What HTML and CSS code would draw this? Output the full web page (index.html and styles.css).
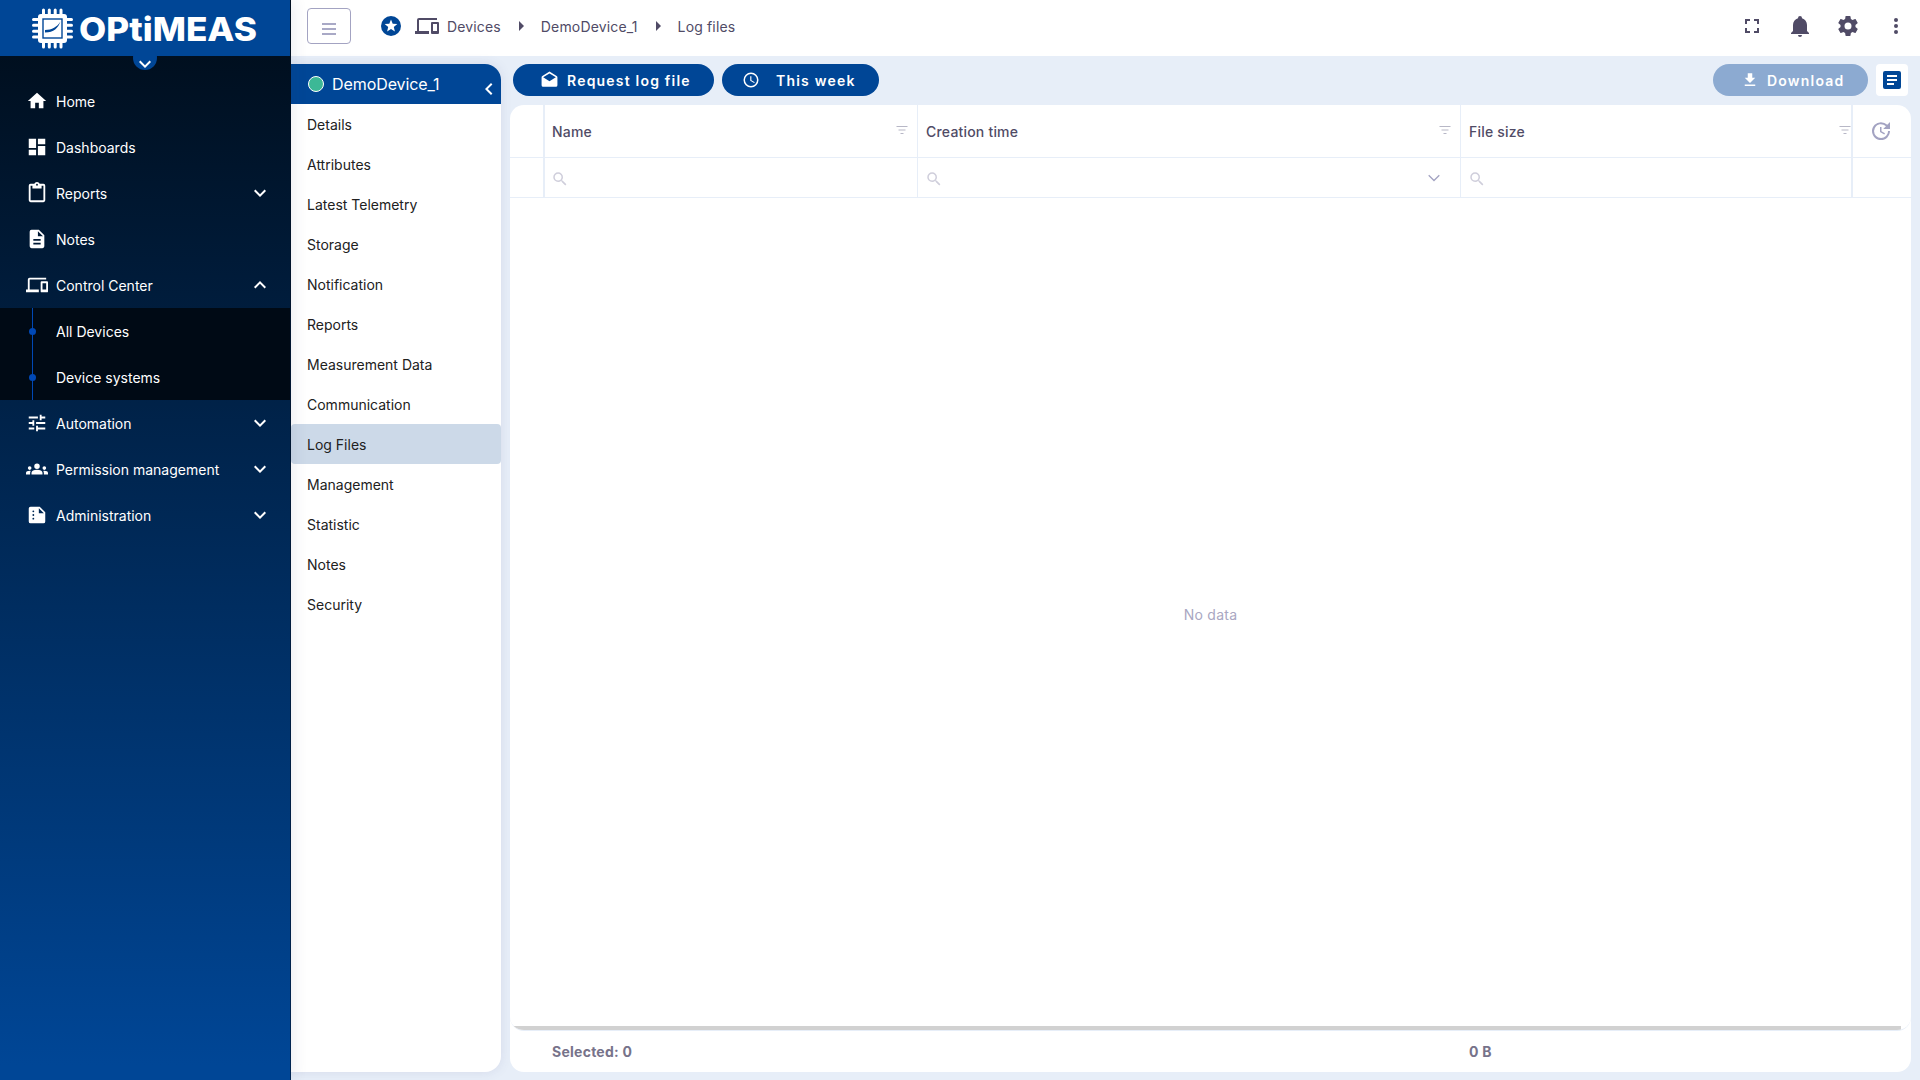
FILE: index.html
```html
<!DOCTYPE html>
<html lang="en">
<head>
    <meta charset="UTF-8">
    <meta name="viewport" content="width=device-width, initial-scale=1.0">
    <title>Log files</title>
    <link rel="stylesheet" href="styles.css">
</head>
<body>
    <aside class="sidebar">
        <div class="logo">
            <svg class="logo-chip" viewBox="0 0 42 42">
                <g stroke="#fff" stroke-width="3" stroke-linecap="round">
                    <path d="M12.5 3v37M18.3 3v37M24.2 3v37M30 3v37M2.5 12.5h38M2.5 18.3h38M2.5 24.2h38M2.5 30h38"/>
                </g>
                <rect x="7" y="7" width="29" height="29" rx="3" fill="#fff"/>
                <rect x="12" y="12" width="19" height="19" fill="none" stroke="#004696" stroke-width="1.4"/>
                <path d="M14 23c7 0 12-3 15.500-8.500C27 21 23 25.500 14 25.500z" fill="#004696"/>
            </svg>
            <svg class="logo-name" viewBox="0 0 190 44">
                <text x="0" y="34" textLength="178" lengthAdjust="spacingAndGlyphs">OPtiMEAS</text>
            </svg>
            <span class="logo-toggle"><svg viewBox="0 0 24 24"><path d="M7.410 8.580 12 13.170l4.590-4.590L18 10l-6 6-6-6z"/></svg></span>
        </div>
        <nav class="menu">
            <a class="menu-item">
                <svg class="icon" viewBox="0 0 24 24"><path d="M10 20v-6h4v6h5v-8h3L12 3 2 12h3v8z"/></svg>
                <span>Home</span>
            </a>
            <a class="menu-item">
                <svg class="icon" viewBox="0 0 24 24"><path d="M13 3v6h8V3m-8 18h8V11h-8M3 21h8v-6H3m0-2h8V3H3z"/></svg>
                <span>Dashboards</span>
            </a>
            <a class="menu-item">
                <svg class="icon" viewBox="0 0 24 24"><path d="M19 2h-4.180C14.400.84 13.300 0 12 0S9.600.84 9.180 2H5a2 2 0 0 0-2 2v16a2 2 0 0 0 2 2h14a2 2 0 0 0 2-2V4a2 2 0 0 0-2-2m-7 0a1 1 0 1 1 0 2 1 1 0 0 1 0-2m7 18H5V4h2v3h10V4h2z"/></svg>
                <span>Reports</span>
                <svg class="arrow" viewBox="0 0 24 24"><path d="M7.410 8.580 12 13.170l4.590-4.590L18 10l-6 6-6-6z"/></svg>
            </a>
            <a class="menu-item">
                <svg class="icon" viewBox="0 0 24 24"><path d="M14 2H6a2 2 0 0 0-2 2v16a2 2 0 0 0 2 2h12a2 2 0 0 0 2-2V8zm2 16H8v-2h8zm0-4H8v-2h8zm-3-5V3.500L18.500 9z"/></svg>
                <span>Notes</span>
            </a>
            <a class="menu-item">
                <svg class="icon" viewBox="0 0 24 24"><path d="M4 6h18V4H4a2 2 0 0 0-2 2v11H0v3h14v-3H4zm19 2h-6a1 1 0 0 0-1 1v10a1 1 0 0 0 1 1h6a1 1 0 0 0 1-1V9a1 1 0 0 0-1-1m-1 9h-4v-7h4z"/></svg>
                <span>Control Center</span>
                <svg class="arrow" viewBox="0 0 24 24"><path d="M7.410 15.410 12 10.830l4.590 4.580L18 14l-6-6-6 6z"/></svg>
            </a>
            <div class="submenu">
                <a class="submenu-item">All Devices</a>
                <a class="submenu-item">Device systems</a>
            </div>
            <a class="menu-item">
                <svg class="icon" viewBox="0 0 24 24"><path d="M3 17v2h6v-2zM3 5v2h10V5zm10 16v-2h8v-2h-8v-2h-2v6zM7 9v2H3v2h4v2h2V9zm14 4v-2H11v2zm-6-4h2V7h4V5h-4V3h-2z"/></svg>
                <span>Automation</span>
                <svg class="arrow" viewBox="0 0 24 24"><path d="M7.410 8.580 12 13.170l4.590-4.590L18 10l-6 6-6-6z"/></svg>
            </a>
            <a class="menu-item">
                <svg class="icon" viewBox="0 0 24 24"><path d="M12 12.750c1.630 0 3.070.39 4.240.9 1.080.48 1.760 1.560 1.760 2.730V18H6v-1.610c0-1.180.68-2.260 1.760-2.730 1.170-.52 2.610-.91 4.240-.91M4 13a2 2 0 1 0 0-4 2 2 0 0 0 0 4m1.130 1.100C4.760 14.040 4.390 14 4 14c-.99 0-1.930.21-2.780.58C.48 14.900 0 15.620 0 16.430V18h4.500v-1.610c0-.83.23-1.610.63-2.290M20 13a2 2 0 1 0 0-4 2 2 0 0 0 0 4m4 3.430c0-.81-.48-1.530-1.220-1.850A6.950 6.950 0 0 0 20 14c-.39 0-.76.04-1.130.1.4.68.63 1.460.63 2.290V18H24zM12 6a3 3 0 1 1 0 6 3 3 0 0 1 0-6"/></svg>
                <span>Permission management</span>
                <svg class="arrow" viewBox="0 0 24 24"><path d="M7.410 8.580 12 13.170l4.590-4.590L18 10l-6 6-6-6z"/></svg>
            </a>
            <a class="menu-item">
                <svg class="icon" viewBox="0 0 24 24"><path d="M15 3H5a2 2 0 0 0-2 2v14a2 2 0 0 0 2 2h14a2 2 0 0 0 2-2V9zM8 17a1 1 0 1 1 0-2 1 1 0 0 1 0 2m0-4a1 1 0 1 1 0-2 1 1 0 0 1 0 2m0-4a1 1 0 1 1 0-2 1 1 0 0 1 0 2m6 1V4.500l5.500 5.500z"/></svg>
                <span>Administration</span>
                <svg class="arrow" viewBox="0 0 24 24"><path d="M7.410 8.580 12 13.170l4.590-4.590L18 10l-6 6-6-6z"/></svg>
            </a>
        </nav>
    </aside>

    <div class="page">
        <header class="topbar">
            <button class="menu-button"><span></span><span></span><span></span></button>
            <div class="breadcrumb">
                <svg class="star" viewBox="0 0 24 24"><circle cx="12" cy="12" r="10"/><path d="m12 5.400 1.700 4.300 4.600.3-3.500 3 1.100 4.500-3.900-2.400-3.900 2.400 1.100-4.500-3.500-3 4.600-.3z" fill="#fff"/></svg>
                <svg class="devices" viewBox="0 0 24 24"><path d="M4 6h18V4H4a2 2 0 0 0-2 2v11H0v3h14v-3H4zm19 2h-6a1 1 0 0 0-1 1v10a1 1 0 0 0 1 1h6a1 1 0 0 0 1-1V9a1 1 0 0 0-1-1m-1 9h-4v-7h4z"/></svg>
                <span class="crumb">Devices</span>
                <svg class="crumb-arrow" viewBox="0 0 24 24"><path d="m10 17 5-5-5-5z"/></svg>
                <span class="crumb">DemoDevice_1</span>
                <svg class="crumb-arrow" viewBox="0 0 24 24"><path d="m10 17 5-5-5-5z"/></svg>
                <span class="crumb">Log files</span>
            </div>
            <div class="actions">
                <svg viewBox="0 0 24 24"><path d="M5 5h5v2H7v3H5zm9 0h5v5h-2V7h-3zm3 9h2v5h-5v-2h3zm-7 3v2H5v-5h2v3z"/></svg>
                <svg viewBox="0 0 24 24"><path d="M21 19v1H3v-1l2-2v-6c0-3.100 2.030-5.830 5-6.710V4a2 2 0 1 1 4 0v.29c2.970.88 5 3.610 5 6.710v6zm-7 2a2 2 0 0 1-4 0"/></svg>
                <svg viewBox="0 0 24 24"><path d="M12 15.500A3.500 3.500 0 0 1 8.500 12 3.500 3.500 0 0 1 12 8.500a3.500 3.500 0 0 1 3.500 3.500 3.500 3.500 0 0 1-3.500 3.500m7.430-2.530c.04-.32.07-.64.07-.97s-.03-.66-.07-1l2.110-1.630c.19-.15.24-.42.12-.64l-2-3.460c-.12-.22-.39-.31-.61-.22l-2.490 1c-.52-.39-1.060-.73-1.690-.98l-.37-2.650A.506.506 0 0 0 14 2h-4c-.25 0-.46.18-.5.42l-.37 2.650c-.63.25-1.170.59-1.690.98l-2.490-1c-.22-.09-.49 0-.61.22l-2 3.460c-.13.22-.07.49.12.64L4.570 11c-.04.34-.07.67-.07 1s.03.65.07.97l-2.110 1.660c-.19.15-.25.42-.12.64l2 3.460c.12.22.39.3.61.22l2.490-1.010c.52.4 1.060.74 1.690.99l.37 2.650c.04.24.25.42.5.42h4c.25 0 .46-.18.5-.42l.37-2.650c.63-.26 1.170-.59 1.690-.99l2.490 1.010c.22.08.49 0 .61-.22l2-3.460c.12-.22.07-.49-.12-.64z"/></svg>
                <svg viewBox="0 0 24 24"><circle cx="12" cy="6" r="2"/><circle cx="12" cy="12" r="2"/><circle cx="12" cy="18" r="2"/></svg>
            </div>
        </header>

        <main class="content">
            <section class="device">
                <div class="device-header">
                    <span class="status"></span>
                    <span class="device-name">DemoDevice_1</span>
                    <svg viewBox="0 0 24 24"><path d="M15.410 16.580 10.830 12l4.580-4.590L14 6l-6 6 6 6z"/></svg>
                </div>
                <a class="device-item">Details</a>
                <a class="device-item">Attributes</a>
                <a class="device-item">Latest Telemetry</a>
                <a class="device-item">Storage</a>
                <a class="device-item">Notification</a>
                <a class="device-item">Reports</a>
                <a class="device-item">Measurement Data</a>
                <a class="device-item">Communication</a>
                <a class="device-item active">Log Files</a>
                <a class="device-item">Management</a>
                <a class="device-item">Statistic</a>
                <a class="device-item">Notes</a>
                <a class="device-item">Security</a>
            </section>

            <section class="logs">
                <div class="toolbar">
                    <button class="btn btn-request">
                        <svg viewBox="0 0 24 24"><path d="m4 8 8 5 8-5-8-5zm18 0v10a2 2 0 0 1-2 2H4a2 2 0 0 1-2-2V8c0-.73.39-1.360.97-1.710L12 .64l9.030 5.650c.58.35.97.98.97 1.710"/></svg>
                        <span>Request log file</span>
                    </button>
                    <button class="btn btn-week">
                        <svg viewBox="0 0 24 24"><path d="M12 20a8 8 0 0 0 8-8 8 8 0 0 0-8-8 8 8 0 0 0-8 8 8 8 0 0 0 8 8m0-18a10 10 0 0 1 10 10 10 10 0 0 1-10 10A10 10 0 0 1 2 12 10 10 0 0 1 12 2m.5 5v5.250l4.500 2.670-.75 1.230L11 13V7z"/></svg>
                        <span>This week</span>
                    </button>
                    <button class="btn btn-download">
                        <svg viewBox="0 0 24 24"><path d="M5 20h14v-2H5m14-9h-4V3H9v6H5l7 7z"/></svg>
                        <span>Download</span>
                    </button>
                    <button class="btn-note">
                        <svg viewBox="0 0 24 24"><path d="M19 3H5a2 2 0 0 0-2 2v14a2 2 0 0 0 2 2h14a2 2 0 0 0 2-2V5a2 2 0 0 0-2-2m-5 14H7v-2h7zm3-4H7v-2h10zm0-4H7V7h10z"/></svg>
                    </button>
                </div>

                <div class="grid">
                    <div class="row head">
                        <div class="cell"></div>
                        <div class="cell">
                            <span>Name</span>
                            <svg class="filter" viewBox="0 0 12 10"><path d="M.5 1.500h11M2.500 5h7M4.500 8.500h3"/></svg>
                        </div>
                        <div class="cell">
                            <span>Creation time</span>
                            <svg class="filter" viewBox="0 0 12 10"><path d="M.5 1.500h11M2.500 5h7M4.500 8.500h3"/></svg>
                        </div>
                        <div class="cell">
                            <span>File size</span>
                            <svg class="filter" viewBox="0 0 12 10"><path d="M.5 1.500h11M2.500 5h7M4.500 8.500h3"/></svg>
                        </div>
                        <div class="cell">
                            <svg class="refresh" viewBox="0 0 24 24"><path d="M21 10.120h-6.780l2.740-2.820c-2.730-2.700-7.150-2.800-9.880-.1a6.875 6.875 0 0 0 0 9.790 7.020 7.020 0 0 0 9.880 0C18.320 15.650 19 14.080 19 12.100h2c0 1.980-.88 4.550-2.640 6.290-3.510 3.480-9.210 3.480-12.720 0-3.500-3.470-3.530-9.110-.02-12.580a8.987 8.987 0 0 1 12.650 0L21 3zM12.500 8v4.250l3.500 2.080-.72 1.210L11 13V8z"/></svg>
                        </div>
                    </div>
                    <div class="row search">
                        <div class="cell"></div>
                        <div class="cell">
                            <svg class="magnify" viewBox="0 0 24 24"><path d="M9.500 3A6.500 6.500 0 0 1 16 9.500c0 1.610-.59 3.090-1.560 4.230l.27.27h.79l5 5-1.500 1.500-5-5v-.79l-.27-.27A6.516 6.516 0 0 1 9.500 16a6.500 6.500 0 1 1 0-13m0 2C7 5 5 7 5 9.500S7 14 9.500 14 14 12 14 9.500 12 5 9.500 5"/></svg>
                        </div>
                        <div class="cell">
                            <svg class="magnify" viewBox="0 0 24 24"><path d="M9.500 3A6.500 6.500 0 0 1 16 9.500c0 1.610-.59 3.090-1.560 4.230l.27.27h.79l5 5-1.500 1.500-5-5v-.79l-.27-.27A6.516 6.516 0 0 1 9.500 16a6.500 6.500 0 1 1 0-13m0 2C7 5 5 7 5 9.500S7 14 9.500 14 14 12 14 9.500 12 5 9.500 5"/></svg>
                            <svg class="drop" viewBox="0 0 12 8"><path d="m.7 1.200 5.300 5.300 5.300-5.300"/></svg>
                        </div>
                        <div class="cell">
                            <svg class="magnify" viewBox="0 0 24 24"><path d="M9.500 3A6.500 6.500 0 0 1 16 9.500c0 1.610-.59 3.090-1.560 4.230l.27.27h.79l5 5-1.500 1.500-5-5v-.79l-.27-.27A6.516 6.516 0 0 1 9.500 16a6.500 6.500 0 1 1 0-13m0 2C7 5 5 7 5 9.500S7 14 9.500 14 14 12 14 9.500 12 5 9.500 5"/></svg>
                        </div>
                        <div class="cell"></div>
                    </div>
                    <div class="grid-body">
                        <p class="no-data">No data</p>
                        <div class="scroll"></div>
                    </div>
                    <div class="row foot">
                        <div></div>
                        <div class="sum">Selected: 0</div>
                        <div></div>
                        <div class="sum">0 B</div>
                        <div></div>
                    </div>
                </div>
            </section>
        </main>
    </div>
</body>
</html>
```
FILE: styles.css
```css
* {
    box-sizing: border-box;
}
body {
    margin: 0;
    display: flex;
    height: 100vh;
    overflow: hidden;
    font-family: Inter, sans-serif;
    font-size: 14px;
    background-color: #e7eef8;
}
svg {
    display: block;
    fill: currentColor;
    flex-shrink: 0;
}
button {
    border: none;
    padding: 0;
    font-family: inherit;
}

/* Sidebar */
.sidebar {
    width: 291px;
    flex-shrink: 0;
    color: #fff;
    background: linear-gradient(180deg, #000f1f 56px, #004696 1065px);
    border-right: 1px solid rgba(0, 15, 35, 0.6);
    z-index: 1;
    box-shadow: 0 0 16px rgba(40, 50, 90, 0.12);
}
.logo {
    position: relative;
    display: flex;
    height: 56px;
    padding: 7px 0 0 31px;
    background-color: #004696;
}
.logo-chip {
    width: 42px;
    height: 42px;
}
.logo-name {
    width: 190px;
    height: 44px;
    margin-left: 6px;
    font-size: 33px;
    font-weight: 800;
    overflow: visible;
}
.logo-toggle {
    position: absolute;
    left: 133px;
    top: 46px;
    width: 24px;
    height: 24px;
    border-radius: 50%;
    background-color: #004696;
}
.logo-toggle svg {
    width: 24px;
    height: 24px;
    margin-top: 6px;
}
.menu {
    padding-top: 22px;
}
.menu-item {
    display: flex;
    align-items: center;
    height: 46px;
    padding: 0 18px 0 26px;
}
.menu-item .icon {
    width: 22px;
    height: 22px;
    margin-right: 8px;
}
.menu-item .arrow {
    width: 24px;
    height: 24px;
    margin-left: auto;
}
.submenu {
    background: linear-gradient(#0048b5, #0048b5) 32px 0 / 1px 100% no-repeat #000a15;
}
.submenu-item {
    display: flex;
    align-items: center;
    height: 46px;
    padding-left: 29px;
}
.submenu-item::before {
    content: "";
    width: 7px;
    height: 7px;
    margin-right: 20px;
    border-radius: 50%;
    background-color: #0048b5;
}

/* Top bar */
.page {
    flex: 1;
    display: flex;
    flex-direction: column;
}
.topbar {
    display: flex;
    align-items: center;
    height: 56px;
    padding: 0 12px 4px 16px;
    background-color: #fff;
    color: #504b66;
}
.menu-button {
    display: flex;
    flex-direction: column;
    justify-content: center;
    align-items: center;
    gap: 3px;
    width: 44px;
    height: 36px;
    padding-top: 6px;
    border: 1px solid #a3a3c2;
    border-radius: 4px;
    background-color: #fff;
}
.menu-button span {
    width: 14px;
    height: 2px;
    background-color: #a9a9c6;
}
.breadcrumb {
    display: flex;
    align-items: center;
    margin-left: 28px;
    letter-spacing: 0.15px;
}
.breadcrumb svg {
    width: 24px;
    height: 24px;
}
.breadcrumb .star {
    color: #004696;
}
.breadcrumb .devices {
    margin: 0 8px 0 12px;
}
.breadcrumb .crumb-arrow {
    margin: 0 8px;
}
.actions {
    display: flex;
    gap: 24px;
    margin-left: auto;
}
.actions svg {
    width: 24px;
    height: 24px;
}

/* Device navigation */
.content {
    flex: 1;
    display: flex;
    gap: 9px;
    padding: 8px 9px 8px 0;
}
.device {
    width: 210px;
    border-radius: 0 16px 16px 0;
    background-color: #fff;
    color: #212121;
    box-shadow: 0 0 12px rgba(80, 80, 140, 0.12);
}
.device-header {
    display: flex;
    align-items: center;
    height: 40px;
    padding: 0 0 0 17px;
    border-top-right-radius: 16px;
    background-color: #004696;
    color: #fff;
    font-size: 16px;
}
.device-name {
    letter-spacing: -0.08px;
}
.device-header svg {
    width: 24px;
    height: 24px;
    margin: 10px 0 0 auto;
}
.status {
    width: 16px;
    height: 16px;
    margin-right: 8px;
    border: 1.5px solid #fff;
    border-radius: 50%;
    background-color: #3cb896;
}
.device-item {
    display: flex;
    align-items: center;
    height: 40px;
    padding: 0 0 0 16px;
    border-radius: 4px;
}
.device-item.active {
    background-color: #ccd9e8;
}

/* Toolbar */
.logs {
    flex: 1;
    display: flex;
    flex-direction: column;
}
.toolbar {
    display: flex;
    gap: 8px;
    height: 41px;
    padding: 0 3px;
}
.btn {
    display: flex;
    align-items: center;
    height: 32px;
    border-radius: 16px;
    background-color: #004696;
    color: #fff;
    font-size: 14px;
    font-weight: 600;
    letter-spacing: 1.2px;
}
.btn svg {
    width: 18px;
    height: 18px;
}
.btn-request {
    width: 201px;
    padding-left: 27px;
}
.btn-request svg {
    width: 19px;
    height: 19px;
    margin-right: 8px;
}
.btn-week {
    width: 157px;
    padding-left: 20px;
}
.btn-week svg {
    margin-right: 16px;
}
.btn-download {
    width: 155px;
    margin-left: auto;
    padding-left: 28px;
    background-color: #8caad1;
}
.btn-download svg {
    margin-right: 8px;
}
.btn-note {
    display: flex;
    align-items: center;
    justify-content: center;
    width: 32px;
    height: 32px;
    border-radius: 4px;
    background-color: #fff;
    color: #004696;
}
.btn-note svg {
    width: 24px;
    height: 24px;
}

/* Data grid */
.grid {
    flex: 1;
    display: flex;
    flex-direction: column;
    border-radius: 14px;
    overflow: hidden;
    background-color: #fff;
    color: #504b66;
}
.row {
    display: grid;
    grid-template-columns: 35px 373px 543px 392px 58px;
}
.cell {
    display: flex;
    align-items: center;
    padding: 0 9px 0 7px;
    border-right: 1px solid #e7eef8;
    border-bottom: 1px solid #e7eef8;
}
.cell:first-child {
    border-right-width: 2px;
}
.cell:nth-child(3) {
    padding-left: 8px;
}
.cell:nth-child(4) {
    padding-right: 0;
    padding-left: 8px;
    border-right-width: 2px;
}
.cell:last-child {
    border-right: none;
    padding: 0 16px;
}
.head {
    height: 53px;
    font-weight: 500;
    letter-spacing: 0.2px;
}
.search {
    height: 40px;
}
.filter {
    width: 12px;
    height: 10px;
    margin: -2px 0 0 auto;
    fill: none;
    stroke: #b7b7c6;
    stroke-width: 1.2;
}
.refresh {
    width: 24px;
    height: 24px;
    color: #a3a3c2;
}
.magnify {
    width: 18px;
    height: 18px;
    margin: 2px 0 0 -1px;
    color: #cfcedb;
}
.drop {
    width: 12px;
    height: 8px;
    margin: 1px 11px 0 auto;
    fill: none;
    stroke: #a3a3c2;
    stroke-width: 1.3;
}
.grid-body {
    flex: 1;
    display: flex;
    flex-direction: column;
    border-bottom: 1px solid #e7eef8;
    border-radius: 0 0 14px 14px;
    overflow: hidden;
}
.no-data {
    flex: 1;
    display: flex;
    align-items: center;
    justify-content: center;
    margin: 0;
    padding-top: 5px;
    color: #a9a7c2;
    letter-spacing: 0.25px;
}
.scroll {
    height: 4px;
    margin-right: 10px;
    background-color: #d1d1d1;
}
.foot {
    height: 41px;
    align-items: center;
    font-weight: 700;
    color: #77738a;
    letter-spacing: 0.25px;
}
.sum {
    padding-left: 7px;
}
.sum:nth-child(4) {
    padding-left: 8px;
}
```
